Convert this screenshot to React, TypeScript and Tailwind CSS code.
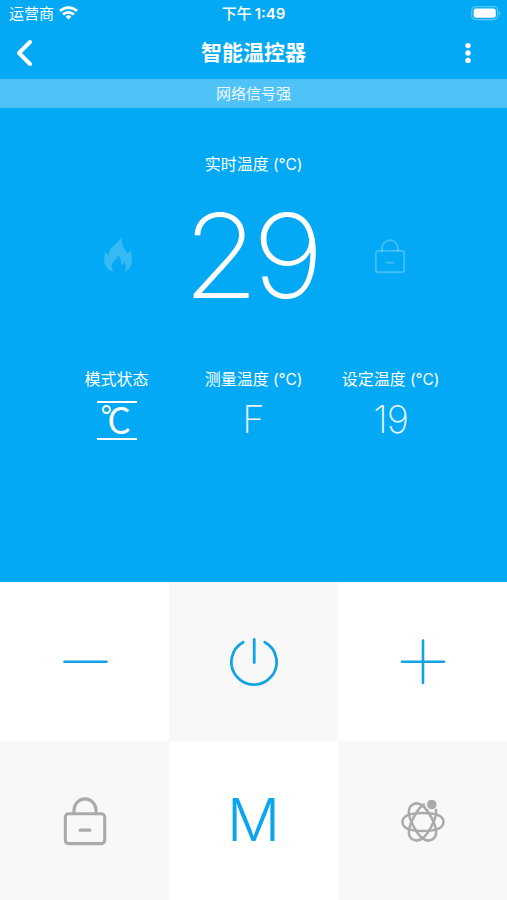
import type { ReactNode } from "react";

const StatusBar = () => {
  return (
    <div className="grid h-[27px] grid-cols-3 items-center text-[15px] leading-none">
      <div className="flex items-center gap-1.5 pl-[9px]">
        <span>运营商</span>
        <svg width="19" height="14" viewBox="0 0 19 14" className="-ml-px -mt-0.5">
          <g fill="none" stroke="currentColor" strokeWidth="2.8">
            <path d="M1 5.1a12.2 12.2 0 0 1 17 0" />
            <path d="M4.1 8.5a7.7 7.7 0 0 1 10.8 0" />
          </g>
          <path d="M9.5 13.6 6.6 10.8a4.1 4.1 0 0 1 5.8 0Z" fill="currentColor" />
        </svg>
      </div>
      <div className="text-center font-medium">
        下午 <span className="-ml-px font-semibold">1:49</span>
      </div>
      <div className="flex items-center justify-end pr-[6px]">
        <svg width="30" height="15" viewBox="0 0 30 15">
          <rect
            x="0.7"
            y="0.7"
            width="26"
            height="13"
            rx="4"
            fill="none"
            stroke="white"
            strokeOpacity="0.35"
            strokeWidth="1.2"
          />
          <rect x="2.6" y="2.6" width="22.2" height="9.2" rx="2.4" fill="white" />
          <path d="M28 5v4.6c1.4-.5 1.4-4.1 0-4.6Z" fill="white" fillOpacity="0.4" />
        </svg>
      </div>
    </div>
  );
};

const Header = () => {
  return (
    <div className="flex h-[52px] items-center justify-between pb-px pl-4 pr-[35px]">
      <svg width="17" height="28" viewBox="0 0 17 28" fill="none">
        <path
          d="M14 3 3 14l11 11"
          stroke="currentColor"
          strokeWidth="4"
          strokeLinecap="round"
          strokeLinejoin="round"
        />
      </svg>
      <h1 className="ml-2.5 text-[21px] font-bold leading-none">智能温控器</h1>
      <svg width="8" height="22" viewBox="0 0 8 22" fill="currentColor">
        <circle cx="4" cy="3.6" r="2.7" />
        <circle cx="4" cy="11" r="2.7" />
        <circle cx="4" cy="18.4" r="2.7" />
      </svg>
    </div>
  );
};

const Unit = () => <span className="text-[15.5px] tracking-[-0.1px]"> (°C)</span>;

const LockIcon = ({ size, stroke }: { size: number; stroke: number }) => (
  <svg
    width={size}
    height={size}
    viewBox="0 0 48 52"
    fill="none"
    stroke="currentColor"
    strokeWidth={stroke}
    strokeLinecap="round"
  >
    <rect x="3.5" y="18.5" width="41" height="31" rx="3.5" />
    <path d="M12.5 18.5V15a11.5 12 0 0 1 23 0v3.5" />
    <path d="M19 35.5h10" />
  </svg>
);

const FlameIcon = () => (
  <svg width="28" height="35" viewBox="0 0 28 35" fill="currentColor">
    <path d="M17.600 0C17 6 19 11 23.700 16.300 25.500 15.500 26.800 14 27.600 12 26.800 16 28 19 27.700 24 27.500 29 25.500 32.500 21 34.600 22.300 31 22.300 28 20.500 25 19.500 26.800 18.700 27.600 17 28 17.800 24 16.500 20.500 14 18.500 13.500 22 9 24.500 8 27.500 7.300 29.800 8.200 32.300 9.300 34.600 4 33.500 .8 29.500 .4 24.500 0 20.500 .3 17 1.600 14.500 2 16.300 2.800 17.600 4.300 18.600 5 9.500 13.500 7 17.600 0Z" />
  </svg>
);

const AtomIcon = () => (
  <svg
    width="48"
    height="48"
    viewBox="0 0 48 48"
    fill="none"
    stroke="currentColor"
    strokeWidth="2.5"
  >
    <path
      d="M20.500 0C20.500 6.500 11.500 9 0 9S-20.500 6.500-20.500 0-11.500-9 0-9 20.500-6.500 20.500 0Z"
      transform="translate(24 25)"
    />
    <path
      d="M20 0C20 7 11.500 10 0 10S-20 7-20 0-11.500-10 0-10 20-7 20 0Z"
      transform="translate(23.500 25) rotate(62)"
    />
    {/* Left open where the electron sits */}
    <path
      d="M18 5.500C14 8.800 8 10 0 10-11.500 10-20 7-20 0S-11.500-10 0-10C8-10 14-8.800 17-6.500"
      transform="translate(23.500 25) rotate(-62)"
    />
    <circle cx="32.800" cy="7.500" r="4.800" fill="currentColor" stroke="none" />
  </svg>
);

const Reading = ({ label, children }: { label: ReactNode; children: ReactNode }) => (
  <div className="flex flex-col items-center">
    <div className="whitespace-nowrap text-base leading-6">{label}</div>
    <div className="flex h-14 items-center justify-center">{children}</div>
  </div>
);

const Key = ({ shaded, children }: { shaded?: boolean; children: ReactNode }) => (
  <button
    className={`flex items-center justify-center ${shaded ? "bg-[#f8f8f8]" : "bg-white"}`}
  >
    {children}
  </button>
);

export default function App() {
  return (
    <div className="flex h-[900px] w-[507px] flex-col overflow-hidden bg-white font-['Inter','Noto_Sans_CJK_SC',sans-serif]">
      {/* Thermostat panel */}
      <div className="flex h-[582px] flex-col bg-[#03a9f4] text-white">
        <StatusBar />
        <Header />
        <div className="flex h-[29px] items-center justify-center bg-[#4fc2f8] pt-0.5 text-[15px] text-white/90">
          网络信号强
        </div>

        <div className="mt-11 text-center text-base leading-6">
          实时温度
          <Unit />
        </div>
        <div className="mt-4 grid h-[126px] grid-cols-[137px_1fr_137px] items-center px-[49px]">
          <div className="flex justify-center pb-1 text-white/20">
            <FlameIcon />
          </div>
          <div className="-ml-1.5 scale-x-[1.05] pb-0.5 text-center text-[117px] font-extralight leading-none tracking-[-6px]">
            29
          </div>
          <div className="flex justify-center text-white/25">
            <LockIcon size={36} stroke={2.6} />
          </div>
        </div>

        <div className="mt-12 grid grid-cols-3 px-[48px]">
          <Reading label="模式状态">
            <div className="mt-0.5 flex h-[39px] w-10 justify-center border-y-2 border-white font-['Noto_Sans_CJK_SC',sans-serif] leading-none">
              <span className="mt-0.5 h-[9px] w-[9px] shrink-0 rounded-full border-2 border-white" />
              <span className="-ml-1 -mt-[3px] text-[37px]">C</span>
            </div>
          </Reading>
          <Reading
            label={
              <>
                测量温度
                <Unit />
              </>
            }
          >
            <span className="pb-0.5 text-[38px] font-extralight text-white/90">F</span>
          </Reading>
          <Reading
            label={
              <>
                设定温度
                <Unit />
              </>
            }
          >
            <span className="pb-0.5 text-[38px] font-extralight tracking-[-1px] text-white/90">19</span>
          </Reading>
        </div>
      </div>

      {/* Keypad */}
      <div className="grid flex-1 grid-cols-3 grid-rows-2 text-[#12a2e6]">
        <Key>
          <svg width="48" height="48" viewBox="0 0 48 48" stroke="currentColor">
            <path d="M3.500 23.700h42" strokeWidth="2.600" strokeLinecap="round" />
          </svg>
        </Key>
        <Key shaded>
          <svg
            width="50"
            height="50"
            viewBox="0 0 50 50"
            fill="none"
            stroke="currentColor"
            strokeWidth="2.800"
            strokeLinecap="round"
          >
            <path d="M14.200 5.200a22.600 22.600 0 1 0 21.600 0" />
            <path d="M25.200 2.500v23" />
          </svg>
        </Key>
        <Key>
          <svg width="48" height="48" viewBox="0 0 48 48" stroke="currentColor">
            <path d="M3 23.700h42M24 2.500v42.500" strokeWidth="2.600" strokeLinecap="round" />
          </svg>
        </Key>
        <Key shaded>
          <span className="text-[#aaaaaa]">
            <LockIcon size={50} stroke={3.2} />
          </span>
        </Key>
        <Key>
          <span className="pb-0.5 text-[59px] font-[260] leading-none text-[#0aa5ee]">M</span>
        </Key>
        <Key shaded>
          <span className="text-[#aaaaaa]">
            <AtomIcon />
          </span>
        </Key>
      </div>
    </div>
  );
}
